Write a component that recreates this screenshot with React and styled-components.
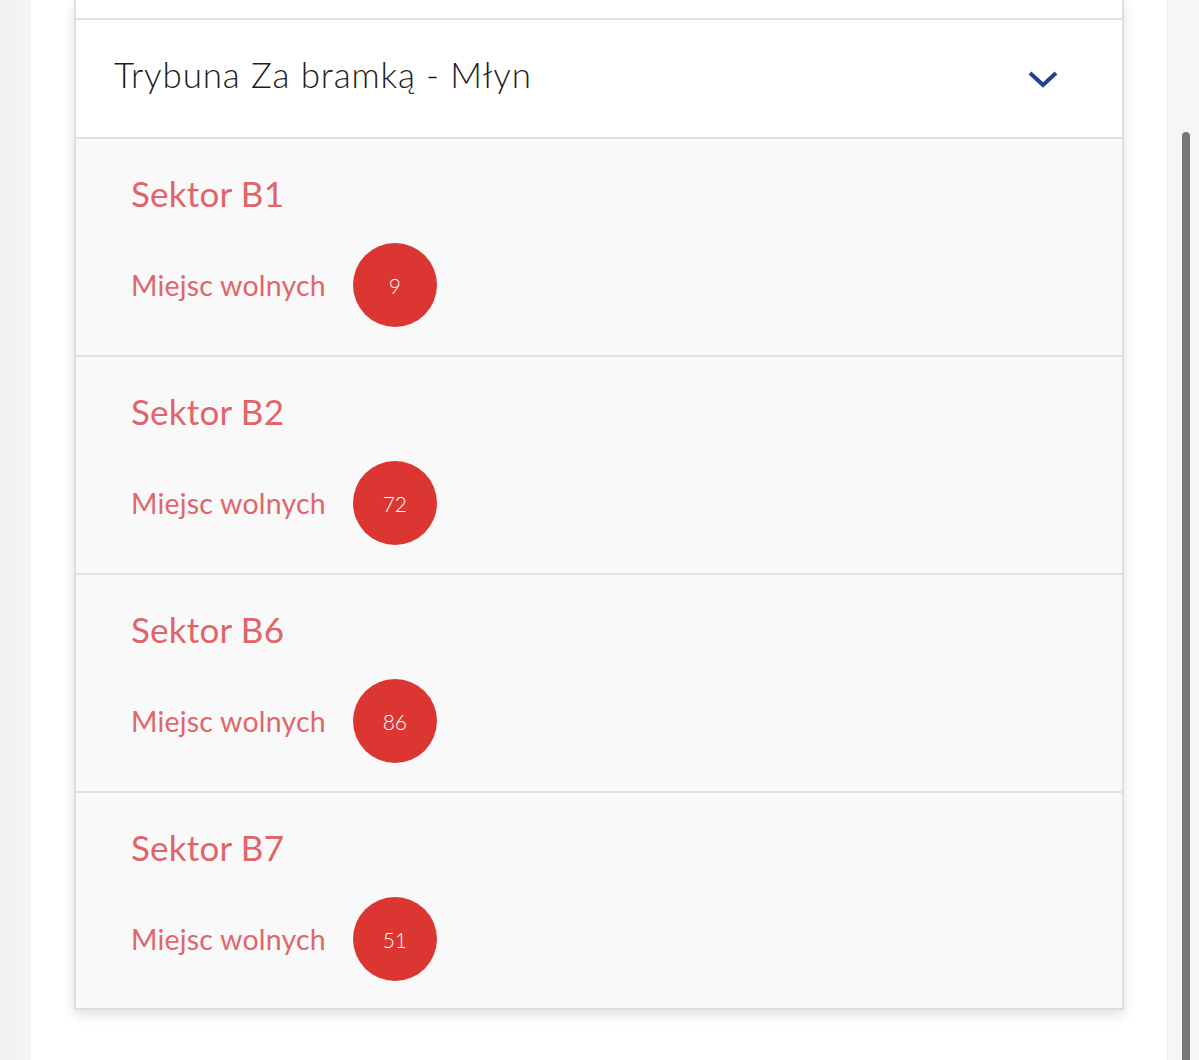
import React from "react";
import styled, { createGlobalStyle } from "styled-components";

const GlobalStyle = createGlobalStyle`
  html, body {
    margin: 0;
    padding: 0;
    background: #f3f3f3;
    font-family: "Lato", "Open Sans", sans-serif;
    overflow: hidden;
  }
`;

const Page = styled.div`
  position: relative;
  width: 1199px;
  height: 1060px;
  display: flex;
  padding-left: 31px;
  box-sizing: border-box;
  background: linear-gradient(to right, #f1f1f1 0, #f6f6f6 31px);
`;

const Panel = styled.div`
  width: 1137px;
  height: 1060px;
  background: #fff;
  padding: 0 43px;
  box-sizing: border-box;
  border-right: 1px solid #ececec;
`;

const Card = styled.div`
  border-left: 2px solid #dedede;
  border-right: 2px solid #dedede;
  border-bottom: 2px solid #dedede;
  box-shadow: 0 5px 12px rgba(0, 0, 0, 0.12);
  background: #fff;
`;

const PrevItem = styled.div`
  height: 18px;
  background: #fff;
  border-bottom: 2px solid #e0e0e0;
`;

const Header = styled.div`
  height: 117px;
  display: flex;
  align-items: center;
  justify-content: space-between;
  padding: 0 63px 0 38px;
  border-bottom: 2px solid #e0e0e0;
  background: #fff;
`;

const HeaderTitle = styled.span`
  font-size: 35px;
  color: #1d1d1d;
  font-weight: 300;
  letter-spacing: 0.85px;
  margin-bottom: 10px;
`;

const Sector = styled.div`
  height: ${(p) => (p.$last ? "215px" : "218px")};
  box-sizing: border-box;
  background: #f9f9f9;
  padding: 30px 0 0 55px;
  border-bottom: ${(p) => (p.$last ? "none" : "2px solid #e2e2e2")};
`;

const SectorTitle = styled.div`
  font-size: 35px;
  color: #e0646a;
  line-height: 48px;
  letter-spacing: 0.2px;
`;

const FreeRow = styled.div`
  display: flex;
  align-items: center;
  gap: 27px;
  margin-top: 26px;
`;

const FreeLabel = styled.span`
  font-size: 28.5px;
  color: #e0666b;
  letter-spacing: 0.2px;
`;

const Badge = styled.div`
  width: 84px;
  height: 84px;
  border-radius: 50%;
  background: #db3632;
  color: #fff;
  font-size: 21px;
  font-weight: 300;
  display: flex;
  align-items: center;
  justify-content: center;
`;

const Scrollbar = styled.div`
  position: absolute;
  left: 1182px;
  top: 132px;
  width: 8px;
  height: 940px;
  border-radius: 4px;
  background: #777;
`;

const sectors = [
  { name: "Sektor B1", free: 9 },
  { name: "Sektor B2", free: 72 },
  { name: "Sektor B6", free: 86 },
  { name: "Sektor B7", free: 51 },
];

export default function App() {
  return (
    <>
      <GlobalStyle />
      <Page>
        <Panel>
          <Card>
            <PrevItem />
            <Header>
              <HeaderTitle>Trybuna Za bramką - Młyn</HeaderTitle>
              <svg width="32" height="22" viewBox="0 0 32 22">
                <path
                  d="M3 5 L16 17 L29 5"
                  fill="none"
                  stroke="#1f4391"
                  strokeWidth="4"
                />
              </svg>
            </Header>
            {sectors.map((s, i) => (
              <Sector key={s.name} $last={i === sectors.length - 1}>
                <SectorTitle>{s.name}</SectorTitle>
                <FreeRow>
                  <FreeLabel>Miejsc wolnych</FreeLabel>
                  <Badge>{s.free}</Badge>
                </FreeRow>
              </Sector>
            ))}
          </Card>
        </Panel>
        <Scrollbar />
      </Page>
    </>
  );
}
